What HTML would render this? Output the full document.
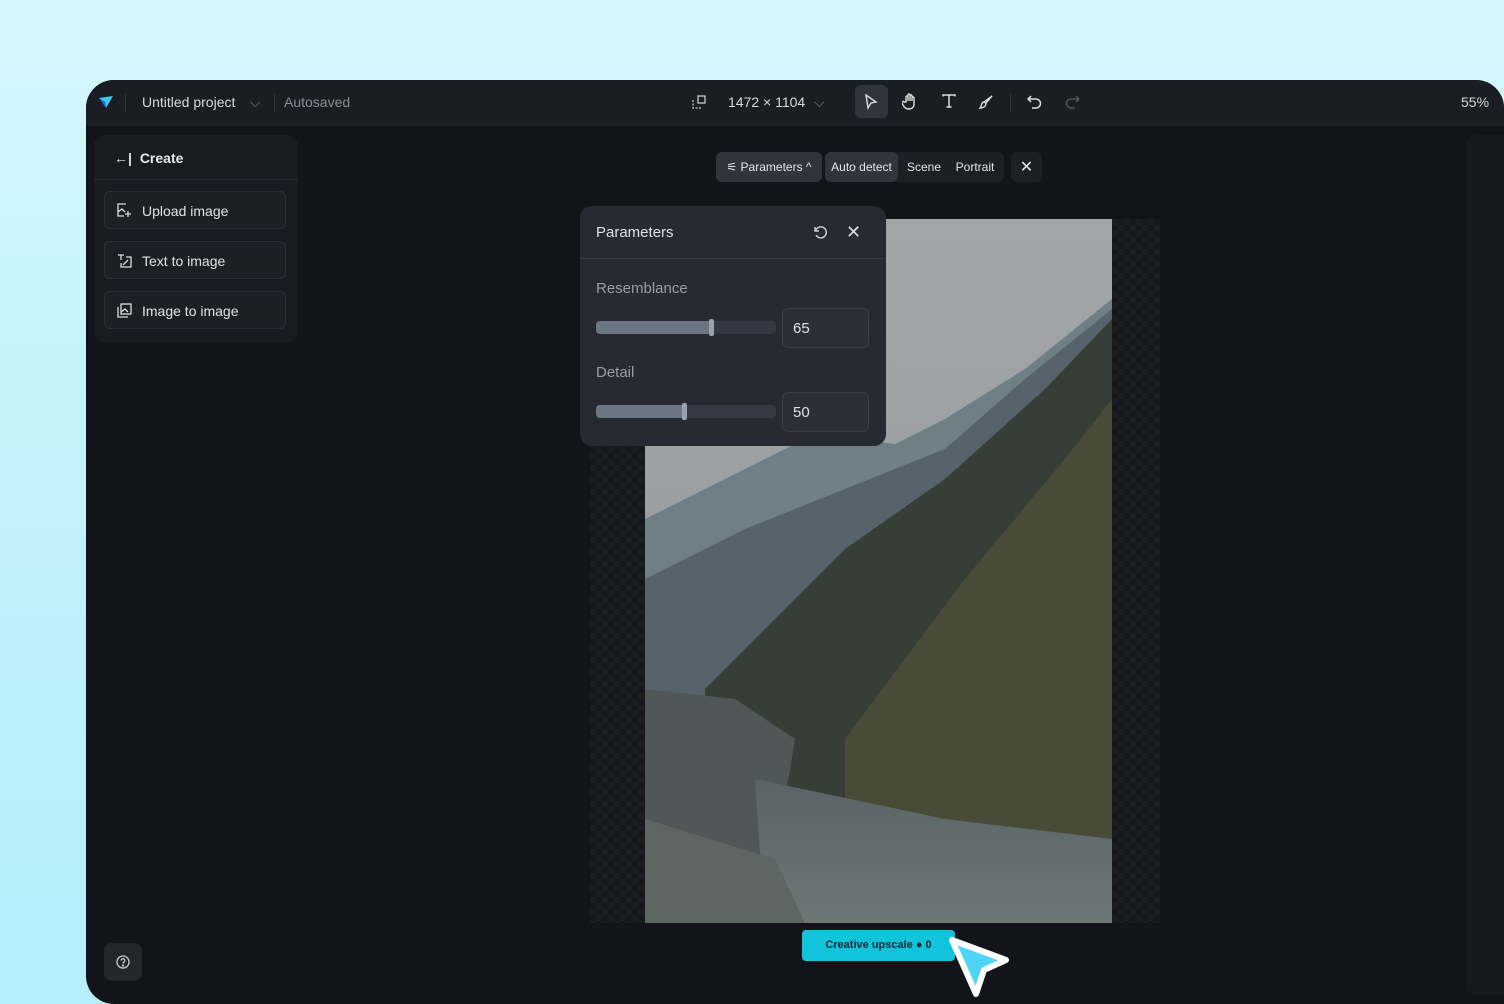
<!DOCTYPE html>
<html><head><meta charset="utf-8"><style>
*{margin:0;padding:0;box-sizing:border-box}
body{width:1504px;height:1004px;overflow:hidden;background:linear-gradient(180deg,#d6f8fc 0%,#c4f2fb 40%,#b4eefb 100%);font-family:"Liberation Sans",sans-serif;position:relative}
.app{position:absolute;left:86px;top:80px;width:1418px;height:924px;background:#121419;border-radius:28px 28px 0 28px;overflow:hidden}
.top{position:absolute;left:0;top:0;right:0;height:46px;background:#1a1d24;color:#d7d9dd;font-size:14px}
.t{position:absolute;top:14px;white-space:nowrap}
.side{position:absolute;left:8px;top:55px;width:204px;height:207px;background:#181b21;border-radius:10px}
.btn{position:absolute;left:10px;width:182px;height:38px;border:1px solid #2a2e36;background:#1c1f26;border-radius:6px;color:#e1e3e6;font-size:14px;padding:11px 0 0 37px}
.btn svg{position:absolute;left:12px;top:11px}
.pill{position:absolute;top:72px;height:30px;border-radius:6px;font-size:12px;color:#e4e6ea;padding-top:8px;text-align:center}
.panel{position:absolute;left:494px;top:126px;width:306px;height:240px;background:#272a32;border-radius:12px;color:#dfe1e5;z-index:3}
.track{position:absolute;left:16px;width:180px;height:13px;background:#353943;border-radius:4px}
.fill{position:absolute;left:0;top:0;height:13px;background:#6b7682;border-radius:4px 0 0 4px}
.knob{position:absolute;top:-2px;width:5px;height:17px;background:#9aa3ad;border-radius:2px}
.num{position:absolute;left:202px;width:87px;height:40px;border:1px solid #3a3e47;background:#2b2f37;border-radius:6px;font-size:15px;padding:11px 0 0 10px}
</style></head><body>
<div class="app">
 <div class="top">
  <svg style="position:absolute;left:12px;top:14px" width="16" height="16" viewBox="0 0 16 16"><path d="M1 4 L15 2 L8 14 L7 8 Z" fill="#3fc9ef"/><path d="M1 4 L7 8 L8 14Z" fill="#1d6fd0"/></svg>
  <div style="position:absolute;left:39px;top:14px;width:1px;height:18px;background:#333"></div>
  <span class="t" style="left:56px">Untitled project</span>
  <span class="t" style="left:164px;color:#777">⌵</span>
  <div style="position:absolute;left:188px;top:14px;width:1px;height:18px;background:#333"></div>
  <span class="t" style="left:198px;color:#8a8e95">Autosaved</span>
  <svg style="position:absolute;left:606px;top:15px" width="14" height="14" viewBox="0 0 14 14" fill="none" stroke="#ccc" stroke-width="1.3"><rect x="6" y="1" width="7" height="7"/><path d="M1 5v8h8" stroke-dasharray="2 1.5"/></svg>
  <span class="t" style="left:642px">1472 × 1104</span>
  <span class="t" style="left:728px;color:#777">⌵</span>
  <div style="position:absolute;left:769px;top:5px;width:33px;height:33px;background:#30343d;border-radius:6px"></div>
  <svg style="position:absolute;left:778px;top:14px" width="14" height="16" viewBox="0 0 14 16" fill="none" stroke="#ddd" stroke-width="1.4"><path d="M2 1 L12 8 L7 9 L4 14 Z"/></svg>
  <svg style="position:absolute;left:816px;top:13px" width="16" height="17" viewBox="0 0 16 17" fill="none" stroke="#ddd" stroke-width="1.4"><path d="M4 9V4a1 1 0 012 0v4V2a1 1 0 012 0v6V3a1 1 0 012 0v5V5a1 1 0 012 0v6c0 3-2 5-5 5s-4-1-6-4l-1-2a1 1 0 012-1z"/></svg>
  <svg style="position:absolute;left:856px;top:14px" width="14" height="14" viewBox="0 0 14 14" fill="none" stroke="#ddd" stroke-width="1.5"><path d="M1 2.5V1h12v1.5M7 1v12M4.5 13h5"/></svg>
  <svg style="position:absolute;left:893px;top:14px" width="15" height="15" viewBox="0 0 15 15" fill="none" stroke="#ddd" stroke-width="1.4"><path d="M13 2 L7 9 L5 8 Z"/><path d="M5 8 C2 8 3 12 1 14 C5 14 7 12 7 9"/></svg>
  <div style="position:absolute;left:924px;top:14px;width:1px;height:18px;background:#333"></div>
  <svg style="position:absolute;left:941px;top:14px" width="16" height="16" viewBox="0 0 16 16" fill="none" stroke="#ddd" stroke-width="1.5"><path d="M4 2 L1 5 L4 8M1 5h8a4 4 0 010 9H5"/></svg>
  <svg style="position:absolute;left:978px;top:14px" width="16" height="16" viewBox="0 0 16 16" fill="none" stroke="#555" stroke-width="1.5"><path d="M12 2 L15 5 L12 8M15 5H7a4 4 0 000 9h4"/></svg>
  <span class="t" style="left:1375px">55%</span>
 </div>
 <div style="position:absolute;left:1380px;top:55px;width:40px;height:860px;background:#16191e;border-radius:10px 0 0 10px"></div>
 <div class="side">
  <div style="position:absolute;left:20px;top:15px;color:#e6e8eb;font-size:14px;font-weight:bold">←| <span style="margin-left:4px">Create</span></div>
  <div style="position:absolute;left:0;right:0;top:44px;height:1px;background:#262a31"></div>
  <div class="btn" style="top:56px"><svg width="15" height="15" viewBox="0 0 15 15" fill="none" stroke="#ddd" stroke-width="1.3"><path d="M9 1H1v12h6M1 9l4-3 3 3"/><path d="M11 8v6M8 11h6"/></svg>Upload image</div>
  <div class="btn" style="top:106px"><svg width="15" height="15" viewBox="0 0 15 15" fill="none" stroke="#ddd" stroke-width="1.3"><path d="M1 2h6M4 2v5M9 4h5v10H4v-4M6 12l5-5"/></svg>Text to image</div>
  <div class="btn" style="top:156px"><svg width="15" height="15" viewBox="0 0 15 15" fill="none" stroke="#ddd" stroke-width="1.3"><rect x="4" y="1" width="10" height="10"/><path d="M1 4v10h10M4 9l4-3 3 3"/></svg>Image to image</div>
 </div>
 <div class="pill" style="left:630px;width:106px;background:#30343d">⚟ Parameters ^</div>
 <div class="pill" style="left:739px;width:179px;background:#1c1f25"></div>
 <div class="pill" style="left:739px;width:73px;background:#30343d">Auto detect</div>
 <div class="pill" style="left:816px;width:44px">Scene</div>
 <div class="pill" style="left:864px;width:50px">Portrait</div>
 <div class="pill" style="left:925px;width:31px;background:#1c1f25;font-size:16px;padding-top:5px">✕</div>
 <div style="position:absolute;left:504px;top:139px;width:570px;height:704px;background-color:#16181c;background-image:repeating-conic-gradient(#1b1d22 0 25%,#15171b 0 50%);background-size:12px 12px"></div>
 <svg style="position:absolute;left:559px;top:139px" width="467" height="704" viewBox="0 0 467 704">
  <defs><linearGradient id="sky" x1="0" y1="0" x2="0" y2="1"><stop offset="0" stop-color="#a3a6a8"/><stop offset="1" stop-color="#8d969a"/></linearGradient>
  <linearGradient id="riv" x1="0" y1="0" x2="0" y2="1"><stop offset="0" stop-color="#5a6466"/><stop offset="1" stop-color="#6e7775"/></linearGradient></defs>
  <rect width="467" height="704" fill="url(#sky)"/>
  <path d="M0 300 L80 260 L170 215 L250 225 L300 200 L380 150 L467 80 V704 H0Z" fill="#707e86"/>
  <path d="M0 360 L100 310 L200 270 L300 230 L380 160 L467 90 V704 H0Z" fill="#56636a"/>
  <path d="M60 470 L200 330 L300 260 L400 170 L467 100 V704 H60Z" fill="#353f38"/>
  <path d="M200 520 L320 360 L420 240 L467 180 V704 H200Z" fill="#4c4d3a" opacity=".85"/>
  <path d="M0 470 L90 480 L150 520 L120 704 H0Z" fill="#505857"/>
  <path d="M110 560 L300 600 L467 620 V704 H120Z" fill="url(#riv)"/>
  <path d="M0 600 L130 640 L160 704 H0Z" fill="#5d6663"/>
 </svg>
 <div class="panel">
  <div style="position:absolute;left:16px;top:18px;font-size:15px">Parameters</div>
  <svg style="position:absolute;left:232px;top:18px" width="16" height="16" viewBox="0 0 16 16" fill="none" stroke="#ccc" stroke-width="1.5"><path d="M3 3v4h4M3.5 7A5.5 5.5 0 1 1 4 11"/></svg>
  <div style="position:absolute;left:266px;top:16px;font-size:18px;color:#ddd">✕</div>
  <div style="position:absolute;left:0;right:0;top:52px;height:1px;background:#353943"></div>
  <div style="position:absolute;left:16px;top:74px;font-size:15px;color:#9a9ea5">Resemblance</div>
  <div class="track" style="top:115px"><div class="fill" style="width:115px"></div><div class="knob" style="left:113px"></div></div>
  <div class="num" style="top:102px">65</div>
  <div style="position:absolute;left:16px;top:158px;font-size:15px;color:#9a9ea5">Detail</div>
  <div class="track" style="top:199px"><div class="fill" style="width:88px"></div><div class="knob" style="left:86px"></div></div>
  <div class="num" style="top:186px">50</div>
 </div>
 <div style="position:absolute;left:716px;top:850px;width:153px;height:31px;background:#12c3dc;border-radius:4px;color:#0d2a33;font-size:11px;font-weight:bold;padding-top:9px;text-align:center">Creative upscale ● 0</div>
 <svg style="position:absolute;left:858px;top:852px" width="70" height="70" viewBox="0 0 70 70"><path d="M8 8 L62 28 L40 38 L32 62 Z" fill="#4fd4f7" stroke="#fff" stroke-width="6" stroke-linejoin="round"/></svg>
 <div style="position:absolute;left:18px;top:863px;width:38px;height:38px;background:#23262d;border-radius:8px"><svg style="position:absolute;left:12px;top:12px" width="14" height="14" viewBox="0 0 14 14" fill="none" stroke="#ccc" stroke-width="1.3"><circle cx="7" cy="7" r="6"/><path d="M5.2 5.5a1.8 1.8 0 113 1.3c-.8.5-1.2.8-1.2 1.7"/><circle cx="7" cy="10.5" r=".5" fill="#ccc"/></svg></div>
</div>
</body></html>
